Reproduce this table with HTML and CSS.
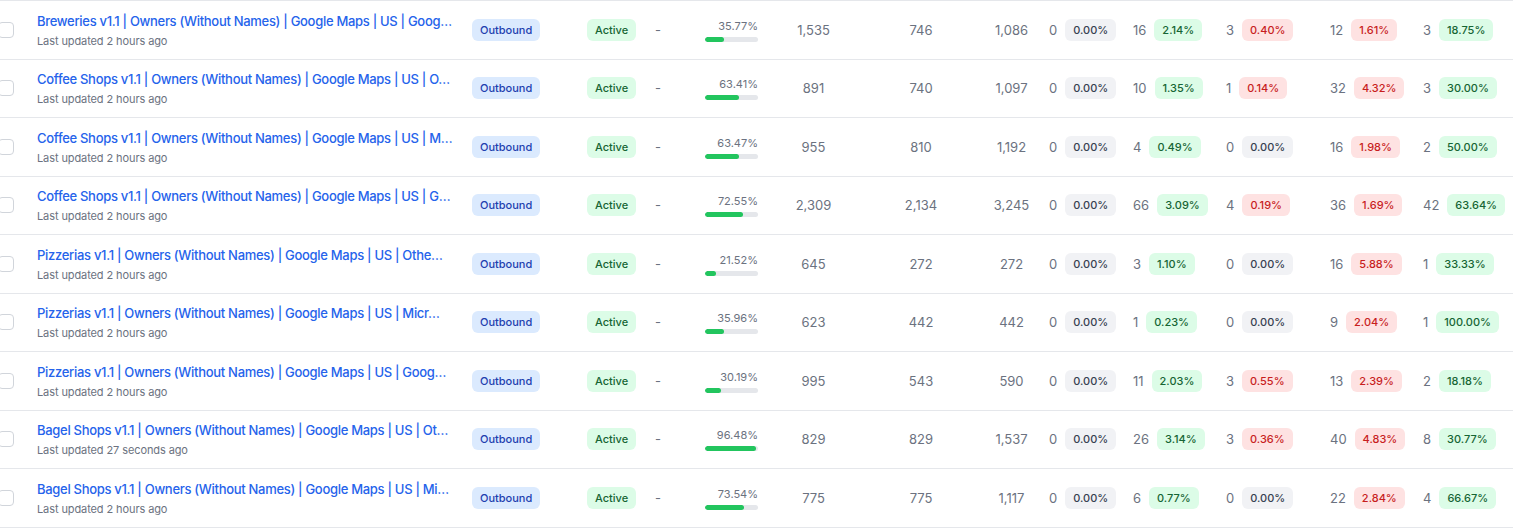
FILE: index.html
```html
<!DOCTYPE html>
<html lang="en">
<head>
<meta charset="utf-8">
<title>Campaigns</title>
<link rel="stylesheet" href="styles.css">
</head>
<body>
<div class="table">
  <div class="row">
    <div class="cell c-check"><span class="checkbox"></span></div>
    <div class="cell c-title"><a class="title">Breweries v1.1 | Owners (Without Names) | Google Maps | US | Goog…</a><div class="sub">Last updated 2 hours ago</div></div>
    <div class="cell c-type"><span class="badge blue">Outbound</span></div>
    <div class="cell c-status"><span class="badge green">Active</span></div>
    <div class="cell c-dash">-</div>
    <div class="cell c-prog"><div class="pct">35.77%</div><div class="track"><div class="fill" style="width:35.77%"></div></div></div>
    <div class="cell c-num">1,535</div>
    <div class="cell c-num">746</div>
    <div class="cell c-num">1,086</div>
    <div class="cell c-grp"><span class="cnt">0</span><span class="badge gray">0.00%</span></div>
    <div class="cell c-grp"><span class="cnt">16</span><span class="badge green">2.14%</span></div>
    <div class="cell c-grp"><span class="cnt">3</span><span class="badge red">0.40%</span></div>
    <div class="cell c-grp"><span class="cnt">12</span><span class="badge red">1.61%</span></div>
    <div class="cell c-grp"><span class="cnt">3</span><span class="badge green">18.75%</span></div>
  </div>
  <div class="row">
    <div class="cell c-check"><span class="checkbox"></span></div>
    <div class="cell c-title"><a class="title">Coffee Shops v1.1 | Owners (Without Names) | Google Maps | US | O…</a><div class="sub">Last updated 2 hours ago</div></div>
    <div class="cell c-type"><span class="badge blue">Outbound</span></div>
    <div class="cell c-status"><span class="badge green">Active</span></div>
    <div class="cell c-dash">-</div>
    <div class="cell c-prog"><div class="pct">63.41%</div><div class="track"><div class="fill" style="width:63.41%"></div></div></div>
    <div class="cell c-num">891</div>
    <div class="cell c-num">740</div>
    <div class="cell c-num">1,097</div>
    <div class="cell c-grp"><span class="cnt">0</span><span class="badge gray">0.00%</span></div>
    <div class="cell c-grp"><span class="cnt">10</span><span class="badge green">1.35%</span></div>
    <div class="cell c-grp"><span class="cnt">1</span><span class="badge red">0.14%</span></div>
    <div class="cell c-grp"><span class="cnt">32</span><span class="badge red">4.32%</span></div>
    <div class="cell c-grp"><span class="cnt">3</span><span class="badge green">30.00%</span></div>
  </div>
  <div class="row">
    <div class="cell c-check"><span class="checkbox"></span></div>
    <div class="cell c-title"><a class="title">Coffee Shops v1.1 | Owners (Without Names) | Google Maps | US | M…</a><div class="sub">Last updated 2 hours ago</div></div>
    <div class="cell c-type"><span class="badge blue">Outbound</span></div>
    <div class="cell c-status"><span class="badge green">Active</span></div>
    <div class="cell c-dash">-</div>
    <div class="cell c-prog"><div class="pct">63.47%</div><div class="track"><div class="fill" style="width:63.47%"></div></div></div>
    <div class="cell c-num">955</div>
    <div class="cell c-num">810</div>
    <div class="cell c-num">1,192</div>
    <div class="cell c-grp"><span class="cnt">0</span><span class="badge gray">0.00%</span></div>
    <div class="cell c-grp"><span class="cnt">4</span><span class="badge green">0.49%</span></div>
    <div class="cell c-grp"><span class="cnt">0</span><span class="badge gray">0.00%</span></div>
    <div class="cell c-grp"><span class="cnt">16</span><span class="badge red">1.98%</span></div>
    <div class="cell c-grp"><span class="cnt">2</span><span class="badge green">50.00%</span></div>
  </div>
  <div class="row">
    <div class="cell c-check"><span class="checkbox"></span></div>
    <div class="cell c-title"><a class="title">Coffee Shops v1.1 | Owners (Without Names) | Google Maps | US | G…</a><div class="sub">Last updated 2 hours ago</div></div>
    <div class="cell c-type"><span class="badge blue">Outbound</span></div>
    <div class="cell c-status"><span class="badge green">Active</span></div>
    <div class="cell c-dash">-</div>
    <div class="cell c-prog"><div class="pct">72.55%</div><div class="track"><div class="fill" style="width:72.55%"></div></div></div>
    <div class="cell c-num">2,309</div>
    <div class="cell c-num">2,134</div>
    <div class="cell c-num">3,245</div>
    <div class="cell c-grp"><span class="cnt">0</span><span class="badge gray">0.00%</span></div>
    <div class="cell c-grp"><span class="cnt">66</span><span class="badge green">3.09%</span></div>
    <div class="cell c-grp"><span class="cnt">4</span><span class="badge red">0.19%</span></div>
    <div class="cell c-grp"><span class="cnt">36</span><span class="badge red">1.69%</span></div>
    <div class="cell c-grp"><span class="cnt">42</span><span class="badge green">63.64%</span></div>
  </div>
  <div class="row">
    <div class="cell c-check"><span class="checkbox"></span></div>
    <div class="cell c-title"><a class="title">Pizzerias v1.1 | Owners (Without Names) | Google Maps | US | Othe…</a><div class="sub">Last updated 2 hours ago</div></div>
    <div class="cell c-type"><span class="badge blue">Outbound</span></div>
    <div class="cell c-status"><span class="badge green">Active</span></div>
    <div class="cell c-dash">-</div>
    <div class="cell c-prog"><div class="pct">21.52%</div><div class="track"><div class="fill" style="width:21.52%"></div></div></div>
    <div class="cell c-num">645</div>
    <div class="cell c-num">272</div>
    <div class="cell c-num">272</div>
    <div class="cell c-grp"><span class="cnt">0</span><span class="badge gray">0.00%</span></div>
    <div class="cell c-grp"><span class="cnt">3</span><span class="badge green">1.10%</span></div>
    <div class="cell c-grp"><span class="cnt">0</span><span class="badge gray">0.00%</span></div>
    <div class="cell c-grp"><span class="cnt">16</span><span class="badge red">5.88%</span></div>
    <div class="cell c-grp"><span class="cnt">1</span><span class="badge green">33.33%</span></div>
  </div>
  <div class="row">
    <div class="cell c-check"><span class="checkbox"></span></div>
    <div class="cell c-title"><a class="title">Pizzerias v1.1 | Owners (Without Names) | Google Maps | US | Micr…</a><div class="sub">Last updated 2 hours ago</div></div>
    <div class="cell c-type"><span class="badge blue">Outbound</span></div>
    <div class="cell c-status"><span class="badge green">Active</span></div>
    <div class="cell c-dash">-</div>
    <div class="cell c-prog"><div class="pct">35.96%</div><div class="track"><div class="fill" style="width:35.96%"></div></div></div>
    <div class="cell c-num">623</div>
    <div class="cell c-num">442</div>
    <div class="cell c-num">442</div>
    <div class="cell c-grp"><span class="cnt">0</span><span class="badge gray">0.00%</span></div>
    <div class="cell c-grp"><span class="cnt">1</span><span class="badge green">0.23%</span></div>
    <div class="cell c-grp"><span class="cnt">0</span><span class="badge gray">0.00%</span></div>
    <div class="cell c-grp"><span class="cnt">9</span><span class="badge red">2.04%</span></div>
    <div class="cell c-grp"><span class="cnt">1</span><span class="badge green">100.00%</span></div>
  </div>
  <div class="row">
    <div class="cell c-check"><span class="checkbox"></span></div>
    <div class="cell c-title"><a class="title">Pizzerias v1.1 | Owners (Without Names) | Google Maps | US | Goog…</a><div class="sub">Last updated 2 hours ago</div></div>
    <div class="cell c-type"><span class="badge blue">Outbound</span></div>
    <div class="cell c-status"><span class="badge green">Active</span></div>
    <div class="cell c-dash">-</div>
    <div class="cell c-prog"><div class="pct">30.19%</div><div class="track"><div class="fill" style="width:30.19%"></div></div></div>
    <div class="cell c-num">995</div>
    <div class="cell c-num">543</div>
    <div class="cell c-num">590</div>
    <div class="cell c-grp"><span class="cnt">0</span><span class="badge gray">0.00%</span></div>
    <div class="cell c-grp"><span class="cnt">11</span><span class="badge green">2.03%</span></div>
    <div class="cell c-grp"><span class="cnt">3</span><span class="badge red">0.55%</span></div>
    <div class="cell c-grp"><span class="cnt">13</span><span class="badge red">2.39%</span></div>
    <div class="cell c-grp"><span class="cnt">2</span><span class="badge green">18.18%</span></div>
  </div>
  <div class="row">
    <div class="cell c-check"><span class="checkbox"></span></div>
    <div class="cell c-title"><a class="title">Bagel Shops v1.1 | Owners (Without Names) | Google Maps | US | Ot…</a><div class="sub">Last updated 27 seconds ago</div></div>
    <div class="cell c-type"><span class="badge blue">Outbound</span></div>
    <div class="cell c-status"><span class="badge green">Active</span></div>
    <div class="cell c-dash">-</div>
    <div class="cell c-prog"><div class="pct">96.48%</div><div class="track"><div class="fill" style="width:96.48%"></div></div></div>
    <div class="cell c-num">829</div>
    <div class="cell c-num">829</div>
    <div class="cell c-num">1,537</div>
    <div class="cell c-grp"><span class="cnt">0</span><span class="badge gray">0.00%</span></div>
    <div class="cell c-grp"><span class="cnt">26</span><span class="badge green">3.14%</span></div>
    <div class="cell c-grp"><span class="cnt">3</span><span class="badge red">0.36%</span></div>
    <div class="cell c-grp"><span class="cnt">40</span><span class="badge red">4.83%</span></div>
    <div class="cell c-grp"><span class="cnt">8</span><span class="badge green">30.77%</span></div>
  </div>
  <div class="row">
    <div class="cell c-check"><span class="checkbox"></span></div>
    <div class="cell c-title"><a class="title">Bagel Shops v1.1 | Owners (Without Names) | Google Maps | US | Mi…</a><div class="sub">Last updated 2 hours ago</div></div>
    <div class="cell c-type"><span class="badge blue">Outbound</span></div>
    <div class="cell c-status"><span class="badge green">Active</span></div>
    <div class="cell c-dash">-</div>
    <div class="cell c-prog"><div class="pct">73.54%</div><div class="track"><div class="fill" style="width:73.54%"></div></div></div>
    <div class="cell c-num">775</div>
    <div class="cell c-num">775</div>
    <div class="cell c-num">1,117</div>
    <div class="cell c-grp"><span class="cnt">0</span><span class="badge gray">0.00%</span></div>
    <div class="cell c-grp"><span class="cnt">6</span><span class="badge green">0.77%</span></div>
    <div class="cell c-grp"><span class="cnt">0</span><span class="badge gray">0.00%</span></div>
    <div class="cell c-grp"><span class="cnt">22</span><span class="badge red">2.84%</span></div>
    <div class="cell c-grp"><span class="cnt">4</span><span class="badge green">66.67%</span></div>
  </div>
</div>
</body>
</html>
```

FILE: styles.css
```css
* { box-sizing: border-box; }
html, body { margin: 0; padding: 0; background: #ffffff; }
body {
  font-family: Inter, "Noto Sans", "Liberation Sans", sans-serif;
  font-size: 13px;
  color: #6b7280;
  overflow: hidden;
}
.table {
  width: 1513px;
  border-bottom: 1px solid #e5e7eb;
}
.row {
  display: grid;
  grid-template-columns: 37px 435px 115px 68px 50px 53px 111px 104px 77px 84px 93px 104px 93px 89px;
  height: 58.5px;
  border-top: 1px solid #e5e7eb;
  align-items: center;
}
.cell { min-width: 0; }
.c-check { display: flex; align-items: center; }
.checkbox {
  display: block;
  width: 16px;
  height: 16px;
  margin-left: -2px;
  border: 1px solid #d1d5db;
  border-radius: 4px;
  background: #ffffff;
}
.c-title { padding-right: 12px; overflow: hidden; }
.title {
  display: block;
  font-size: 13px;
  line-height: 20px;
  font-weight: 500;
  letter-spacing: -0.3px;
  color: #2563eb;
  white-space: nowrap;
  overflow: hidden;
  text-overflow: ellipsis;
  cursor: pointer;
}
.sub {
  margin-top: 2px;
  font-size: 11px;
  line-height: 16px;
  letter-spacing: -0.1px;
  color: #6b7280;
}
.badge {
  display: inline-block;
  font-size: 11px;
  line-height: 16px;
  font-weight: 500;
  padding: 3px 8px;
  border-radius: 6px;
  white-space: nowrap;
}
.blue { background: #dbeafe; color: #1e40af; }
.green { background: #dcfce7; color: #166534; }
.red { background: #fee2e2; color: #c81e1e; }
.gray { background: #f1f2f5; color: #374151; }
.c-dash { font-size: 13px; color: #6b7280; }
.c-prog { display: flex; flex-direction: column; align-items: stretch; }
.pct {
  font-size: 11px;
  line-height: 16px;
  text-align: right;
  color: #6b7280;
}
.track {
  margin-top: 3px;
  height: 5px;
  border-radius: 3px;
  background: #e5e7eb;
  overflow: hidden;
}
.fill { height: 100%; background: #22c55e; border-radius: 3px; }
.c-num { text-align: center; font-size: 13px; color: #6b7280; }
.c-grp {
  display: flex;
  align-items: center;
  gap: 8px;
  margin-left: -1px;
}
.cnt { font-size: 13px; color: #6b7280; }
```
